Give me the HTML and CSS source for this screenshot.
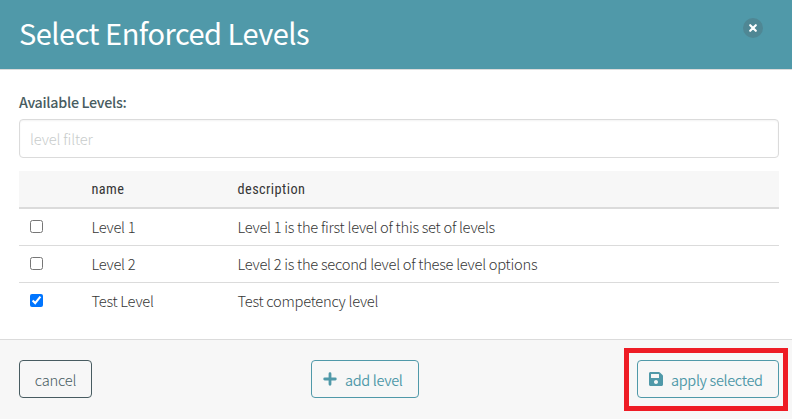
FILE: index.html
```html
<!DOCTYPE html>
<html lang="en">
<head>
<meta charset="utf-8">
<title>Select Enforced Levels</title>
<link rel="stylesheet" href="styles.css">
</head>
<body>
<div class="modal">
  <header class="modal-head">
    <h1 class="title">Select Enforced Levels</h1>
    <button class="close" aria-label="close"><svg width="10" height="10" viewBox="0 0 10 10"><path d="M2.2 2.2 7.8 7.8M7.8 2.2 2.2 7.8" stroke="#fff" stroke-width="2.2" stroke-linecap="round"/></svg></button>
  </header>
  <main class="modal-body">
    <label class="label" for="filter">Available Levels:</label>
    <input class="filter" id="filter" type="text" placeholder="level filter">
    <table class="levels">
      <thead><tr><th class="pick"></th><th class="name">name</th><th>description</th></tr></thead>
      <tbody>
        <tr><td><input class="check" type="checkbox"></td><td>Level 1</td><td>Level 1 is the first level of this set of levels</td></tr>
        <tr><td><input class="check" type="checkbox"></td><td>Level 2</td><td>Level 2 is the second level of these level options</td></tr>
        <tr><td><input class="check" type="checkbox" checked></td><td>Test Level</td><td>Test competency level</td></tr>
      </tbody>
    </table>
  </main>
  <footer class="modal-foot">
    <button class="btn cancel">cancel</button>
    <button class="btn add"><svg class="icon" width="14" height="14" viewBox="0 0 14 14"><path d="M7 1.7v10.6M1.7 7h10.6" stroke="currentColor" stroke-width="2.8" stroke-linecap="round"/></svg>add level</button>
    <div class="apply-wrap">
      <button class="btn apply"><svg class="icon" width="14" height="14" viewBox="0 32 448 448"><path fill="currentColor" d="M433.941 129.941l-83.882-83.882A48 48 0 0 0 316.118 32H48C21.49 32 0 53.49 0 80v352c0 26.51 21.49 48 48 48h352c26.51 0 48-21.49 48-48V163.882a48 48 0 0 0-14.059-33.941zM224 416c-35.346 0-64-28.654-64-64s28.654-64 64-64 64 28.654 64 64-28.654 64-64 64zm96-304.52V212c0 6.627-5.373 12-12 12H76c-6.627 0-12-5.373-12-12V108c0-6.627 5.373-12 12-12h228.52c3.183 0 6.235 1.264 8.485 3.515l3.48 3.48A11.996 11.996 0 0 1 320 111.48z"/></svg>apply selected</button>
      <span class="highlight"></span>
    </div>
  </footer>
</div>
</body>
</html>
```
FILE: styles.css
```css
* { box-sizing: border-box; }
body {
  margin: 0;
  background: #fff;
  color: #363636;
  font-family: "Noto Sans CJK SC", "Noto Sans", sans-serif;
  font-size: 14.7px;
  font-weight: 300;
  letter-spacing: -.27px;
}
.modal { height: 419px; display: flex; flex-direction: column; overflow: hidden; }
.modal-head {
  height: 70px;
  flex: none;
  display: flex;
  justify-content: space-between;
  padding: 0 29px 0 19px;
  background: #5099a9;
  border-bottom: 1px solid #dbdbdb;
}
.title { margin: 0; color: #fff; font-size: 29px; font-weight: 400; line-height: 65px; letter-spacing: -.5px; white-space: nowrap; }
.close {
  width: 20px; height: 20px; margin-top: 18px; padding: 0;
  display: flex; align-items: center; justify-content: center;
  border: 0; border-radius: 50%; background: #4f8794;
}
.modal-body { flex: 1; padding: 20px 13px 0 19px; }
.label { display: block; height: 24px; margin-bottom: 5px; line-height: 23px; color: #485c61; font-weight: 500; font-size: 14.3px; letter-spacing: -.3px; }
.filter {
  display: block; width: 100%; height: 39px; padding: 0 11px 1px 10px;
  border: 1px solid #dbdbdb; border-radius: 4px; background: #fff;
  box-shadow: inset 0 1px 2px rgba(10, 10, 10, .05);
  font: inherit; letter-spacing: -.15px; color: #363636; outline: none;
}
.filter::placeholder { color: #c8cccb; opacity: 1; }
.levels { width: 100%; margin-top: 13px; border-collapse: separate; border-spacing: 0; table-layout: fixed; }
.levels th, .levels td { padding: 0 11px 0 10.5px; height: 37px; line-height: 35px; text-align: left; vertical-align: top; border-bottom: 1px solid #dbdbdb; white-space: nowrap; }
.levels th {
  height: 38px; line-height: 36px; background: #f7f7f7; border-bottom-width: 2px;
  font-family: "Roboto Condensed", Roboto, sans-serif; font-stretch: condensed;
  font-size: 14.3px; font-weight: 400; letter-spacing: .42px;
}
.levels tr:last-child td { border-bottom: 0; }
.levels .pick { width: 62px; }
.levels .name { width: 146px; }
.check { display: block; width: 13px; height: 13px; margin: 11px 0 0 .5px; }
.modal-foot {
  height: 80px; flex: none; display: flex; align-items: flex-start; justify-content: space-between;
  padding: 20px 13px 0 19px; background: #f7f7f7; border-top: 1px solid #dbdbdb;
}
.btn {
  height: 38px; padding: 0; display: flex; align-items: center; justify-content: center;
  background: transparent; border: 1px solid; border-radius: 4px;
  font: inherit; letter-spacing: -.2px; white-space: nowrap;
}
.icon { flex: none; margin-right: 8px; }
.cancel { width: 73px; color: #485c61; }
.add, .apply { justify-content: flex-start; padding-left: 11px; color: #5099a9; font-size: 14.5px; font-weight: 350; letter-spacing: -.35px; }
.add { width: 108px; margin-left: 1px; }
.apply { width: 142px; }
.apply-wrap { position: relative; }
.highlight { position: absolute; left: -13px; top: -12px; width: 164px; height: 63px; border: 5px solid #ee1c25; pointer-events: none; }
```
